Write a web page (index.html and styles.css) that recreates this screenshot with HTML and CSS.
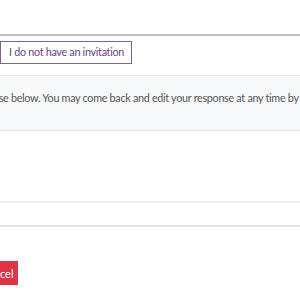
FILE: index.html
```html
<!DOCTYPE html>
<html>
<head>
<meta charset="utf-8">
<link rel="stylesheet" href="styles.css">
</head>
<body>
<div class="page">
  <header class="top"></header>
  <div class="choice">
    <button class="btn-outline">I do not have an invitation</button>
  </div>
  <div class="notice">
    <p>Please enter your response below. You may come back and edit your response at any time by returning to this page.</p>
  </div>
  <div class="field"></div>
  <div class="actions">
    <button class="btn-danger">Cancel</button>
  </div>
</div>
</body>
</html>
```

FILE: styles.css
```css
html, body {
  margin: 0;
  padding: 0;
  background: #fff;
  overflow: hidden;
}
body {
  font-family: Lato, "Noto Sans", sans-serif;
  color: #555;
}
.page {
  width: 300px;
  height: 300px;
}
.top {
  height: 34px;
  border-bottom: 2px solid #c2bec5;
}
.choice {
  padding-top: 5px;
  display: flex;
}
.btn-outline {
  box-sizing: border-box;
  height: 23px;
  width: 132px;
  margin: 0;
  padding: 0 0 1px 1px;
  background: #fff;
  border: 1px solid #7e6390;
  color: #6d3f80;
  font-family: Lato, "Noto Sans", sans-serif;
  font-size: 10.8px;
  letter-spacing: -0.3px;
  line-height: 20px;
  white-space: nowrap;
}
.notice {
  margin-top: 11px;
  height: 56px;
  box-sizing: border-box;
  padding-top: 15px;
  background: #f7f8fa;
  border-top: 1px solid #ebebed;
  border-bottom: 1px solid #e2e2e4;
  display: flex;
  align-items: flex-start;
  overflow: hidden;
}
.notice p {
  margin: 0 0 0 -111px;
  white-space: nowrap;
  font-size: 10.8px;
  letter-spacing: -0.3px;
  line-height: 14px;
  color: #555;
}
.field {
  margin-top: 70px;
  height: 22px;
  border-top: 2px solid #efeff0;
  border-bottom: 2px solid #e4e4e6;
}
.actions {
  margin-top: 34px;
  display: flex;
}
.btn-danger {
  margin: 0 0 0 -23px;
  height: 24px;
  padding: 0 4px;
  border: none;
  background: #dc3545;
  color: #fff;
  font-family: Lato, "Noto Sans", sans-serif;
  font-size: 11px;
}
```
